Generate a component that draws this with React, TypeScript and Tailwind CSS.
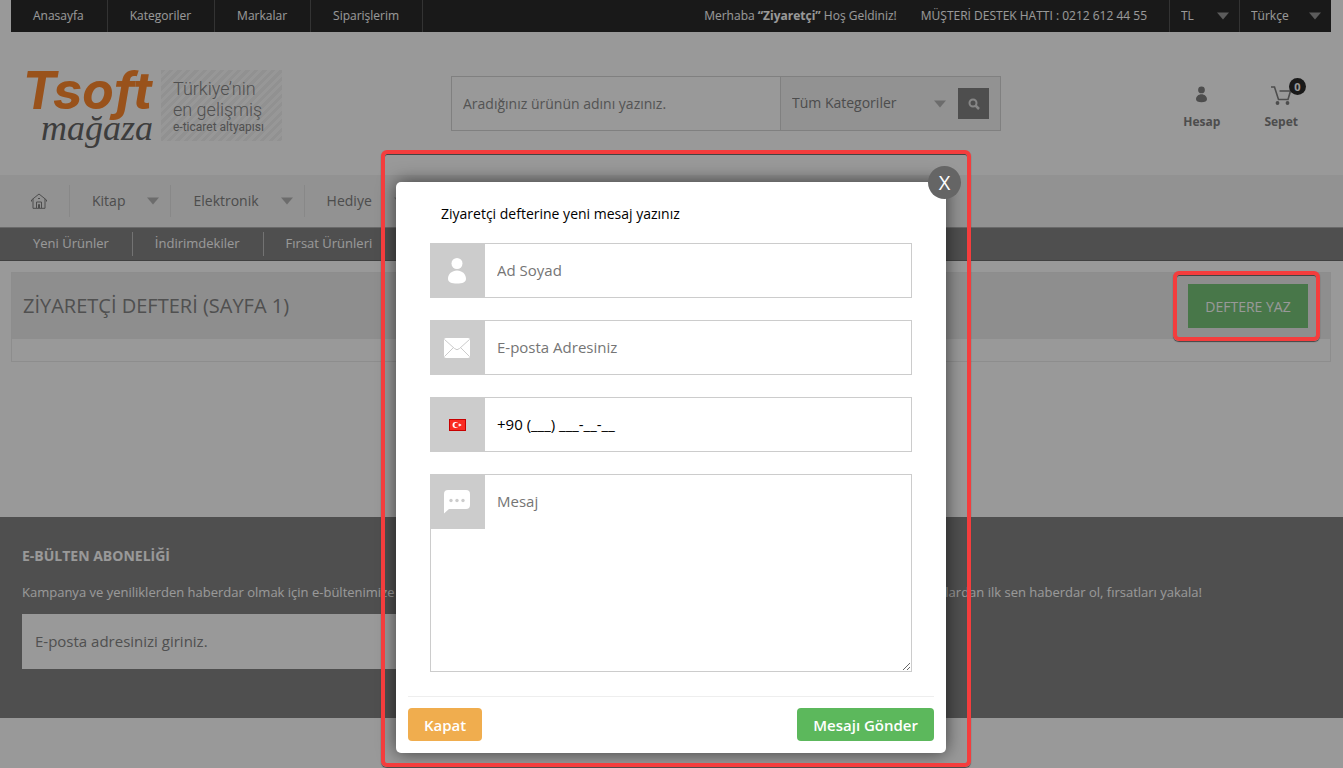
import { useState } from "react";
import type { ReactNode } from "react";

const topLinks = ["Anasayfa", "Kategoriler", "Markalar", "Siparişlerim"];
const categories = ["Kitap", "Elektronik", "Hediye"];
const subLinks = ["Yeni Ürünler", "İndirimdekiler", "Fırsat Ürünleri"];

const Arrow = ({ className = "" }: { className?: string }) => (
  <svg viewBox="0 0 12 8" className={`w-3 h-2 shrink-0 pointer-events-none ${className}`} fill="currentColor">
    <path d="M0 0.5h12L6 7.5z" />
  </svg>
);

const UserIcon = ({ className = "" }: { className?: string }) => (
  <svg viewBox="0 0 18 26" className={className} fill="currentColor">
    <circle cx="9" cy="5.5" r="5.5" />
    <path d="M9 12.5c5 0 9 3.600 9 8.200 0 3.300-3.500 4.800-9 4.800s-9-1.500-9-4.800c0-4.600 4-8.200 9-8.200z" />
  </svg>
);

const Logo = () => (
  <a href="#" className="flex items-start gap-2 shrink-0 whitespace-nowrap">
    <span className="flex flex-col w-[131px]">
      <span className="font-['Inter',sans-serif] font-bold italic text-[52px] leading-[50px] text-[#ff892e]">Tsoft</span>
      <span className="self-end font-['Liberation_Serif',serif] italic text-[36px] leading-6 text-[#666]">mağaza</span>
    </span>
    <span className="flex flex-col mt-1 w-[121px] h-[71px] pt-2 pl-3 text-[#858585] bg-[repeating-linear-gradient(135deg,#f2f2f2_0px,#f2f2f2_3px,#fcfcfc_3px,#fcfcfc_6px)] font-['Roboto',sans-serif] font-light">
      <span className="text-lg leading-[21px]">Türkiye’nin</span>
      <span className="text-lg leading-[21px]">en gelişmiş</span>
      <span className="text-xs leading-[14px] font-normal">e-ticaret altyapısı</span>
    </span>
  </a>
);

const Field = ({ id, icon, tall, children }: { id: string; icon: ReactNode; tall?: boolean; children: ReactNode }) => (
  <div className={`flex items-start border border-[#ccc] mb-[22px] ${tall ? "h-[198px]" : "h-[55px]"}`}>
    <label htmlFor={id} className="flex items-center justify-center w-[55px] h-[55px] pr-px -mt-px -ml-px bg-[#ccc] text-white shrink-0">
      {icon}
    </label>
    {children}
  </div>
);

const inputClass = "flex-1 min-w-0 h-[53px] px-3 pb-[2px] text-[15px] bg-transparent text-black placeholder-[#757575] outline-none";

const TopBar = () => (
  <div className="ml-[11px] mr-3 h-8 flex justify-between bg-[#2b2b2b] text-white text-xs">
    <nav className="flex">
      {topLinks.map((link) => (
        <a key={link} href="#" className="flex items-center pl-[22px] pr-[23px] border-r border-[#555]">{link}</a>
      ))}
    </nav>
    <div className="flex items-center whitespace-nowrap">
      <p className="mr-6">Merhaba <b>“Ziyaretçi”</b> Hoş Geldiniz!</p>
      <p className="mr-[22px]">MÜŞTERİ DESTEK HATTI : 0212 612 44 55</p>
      <div className="flex items-center h-8 w-[70px] pr-[10px] border-l border-[#555]">
        <select aria-label="Para birimi" className="appearance-none flex-1 min-w-0 h-8 pl-[11px] bg-transparent outline-none">
          <option>TL</option>
        </select>
        <Arrow className="text-[#999]" />
      </div>
      <div className="flex items-center h-8 w-[92px] pr-[10px] border-l border-[#555]">
        <select aria-label="Dil" className="appearance-none flex-1 min-w-0 h-8 pl-[11px] bg-transparent outline-none">
          <option>Türkçe</option>
        </select>
        <Arrow className="text-[#999]" />
      </div>
    </div>
  </div>
);

const Header = () => (
  <header className="flex items-start h-[143px] pl-[22px] pr-[45px]">
    <div className="pt-[34px] shrink-0"><Logo /></div>
    <form className="flex mt-11 ml-[169px] mr-auto w-[550px] h-[55px] border border-[#d5d5d5] text-sm text-[#808080]">
      <input aria-label="Ürün ara" placeholder="Aradığınız ürünün adını yazınız." className="flex-1 min-w-0 px-[11px] placeholder-[#8c8c8c] outline-none" />
      <div className="flex items-center w-[220px] pr-[11px] bg-[#f3f3f3] border-l border-[#d5d5d5]">
        <select aria-label="Kategori" className="appearance-none flex-1 min-w-0 h-full pl-[11px] pb-[2px] bg-transparent outline-none">
          <option>Tüm Kategoriler</option>
        </select>
        <Arrow className="text-[#b5b5b5] mr-3" />
        <button type="button" aria-label="Ara" className="flex items-center justify-center w-[31px] h-[31px] bg-[#838383] text-[#e0e0e0]">
          <svg viewBox="0 0 12 12" className="w-3 h-3" fill="none" stroke="currentColor" strokeWidth="2">
            <circle cx="5" cy="5" r="3.500" />
            <path d="M7.500 7.500l3.500 3.500" strokeWidth="2.500" />
          </svg>
        </button>
      </div>
    </form>
    <div className="flex gap-11 pt-[54px] text-xs font-bold text-[#808080]">
      <a href="#" className="flex flex-col items-center gap-[11px]">
        <UserIcon className="w-[11px] h-[17px]" />
        Hesap
      </a>
      <a href="#" className="relative flex flex-col items-center gap-[9px]">
        <svg viewBox="0 0 20 19" className="w-5 h-[19px]" fill="none" stroke="currentColor" strokeWidth="1.600">
          <path d="M0 1h3.500l4 12.500h9.500l2.500-8.500H8.500" />
          <circle cx="6.500" cy="17" r="1.100" fill="currentColor" />
          <circle cx="16.500" cy="17" r="1.100" fill="currentColor" />
        </svg>
        Sepet
        <span className="absolute -top-2 -right-2 w-[17px] h-[17px] rounded-full bg-[#2b2b2b] text-white text-[11px] leading-[17px] text-center">0</span>
      </a>
    </div>
  </header>
);

const Navigation = () => (
  <>
    <nav className="flex items-center h-[52px] px-[11px] bg-[#f3f3f3] text-sm text-[#808080]">
      <a href="#" aria-label="Anasayfa" className="flex items-center h-8 pl-5 pr-[22px] border-r border-[#e3e3e3]">
        <svg viewBox="0 0 16 16" className="w-4 h-4" fill="none" stroke="currentColor">
          <path d="M0.500 8.500V7L8 1l7.500 6v1.500M2 6v9.300h12V6M5.500 15V9h5v6M7.500 15v-3.500h1V15M7 5.500h2" />
        </svg>
      </a>
      {categories.map((category) => (
        <a key={category} href="#" className="flex items-center h-8 pl-[22px] pr-[11px] border-r border-[#e3e3e3]">
          {category}
          <Arrow className="text-[#b5b5b5] ml-[22px]" />
        </a>
      ))}
    </nav>
    <nav className="flex items-center h-[34px] px-[11px] bg-[#848484] border-t border-b border-t-[#b0b0b0] border-b-[#6c6c6c] text-[13px] text-white">
      {subLinks.map((link) => (
        <a key={link} href="#" className="flex items-center h-6 pl-[22px] pr-[23px] border-r border-[#c0c0c0] last:border-r-0">{link}</a>
      ))}
    </nav>
  </>
);

const Newsletter = () => (
  <section className="h-[201px] px-[22px] pt-7 bg-[#848484] text-white">
    <h2 className="text-sm leading-[22px] font-bold">E-BÜLTEN ABONELİĞİ</h2>
    <div className="flex justify-between mt-[15px] mb-3 text-[13px] leading-5 pr-[119px]">
      <p>Kampanya ve yeniliklerden haberdar olmak için e-bültenimize abone olun.</p>
      <p>Kampanyalardan ilk sen haberdar ol, fırsatları yakala!</p>
    </div>
    <input type="email" aria-label="E-posta adresi" placeholder="E-posta adresinizi giriniz." className="w-1/2 h-[55px] px-[13px] pb-[2px] bg-white text-[15px] placeholder-[#858585] outline-none" />
  </section>
);

const MessageModal = ({ onClose }: { onClose: () => void }) => {
  const [form, setForm] = useState({ name: "", email: "", phone: "+90 (___) ___-__-__", message: "" });

  const handleChange = (e: React.ChangeEvent<HTMLInputElement | HTMLTextAreaElement>) => {
    const { name, value } = e.target;
    setForm({ ...form, [name]: value });
  };

  return (
    <div className="absolute left-0 right-px top-[182px] flex justify-center">
      <div role="dialog" aria-label="Ziyaretçi defteri" className="relative w-[550px] bg-white rounded-[5px] shadow-[0_0_18px_rgba(0,0,0,0.6)] px-3 pt-[21px] pb-3">
        <div className="absolute -top-8 -left-[15px] -right-[25px] -bottom-[14px] border-4 border-[#f43d3d] rounded-md shadow-[0_1px_1px_#444,inset_0_1px_0_#444] pointer-events-none" />
        <button type="button" onClick={onClose} aria-label="Pencereyi kapat" className="absolute -top-4 -right-[15px] w-[33px] h-[33px] rounded-full bg-[#656565] text-white text-xl leading-8">X</button>
        <form onSubmit={(e) => e.preventDefault()}>
          <div className="px-[22px]">
            <h3 className="pl-[11px] mb-[18px] text-sm leading-[22px] text-black">Ziyaretçi defterine yeni mesaj yazınız</h3>
            <Field id="name" icon={<UserIcon className="w-[18px] h-[26px]" />}>
              <input id="name" name="name" value={form.name} onChange={handleChange} placeholder="Ad Soyad" className={inputClass} />
            </Field>
            <Field
              id="email"
              icon={
                <svg viewBox="0 0 26 20" className="w-[26px] h-5">
                  <rect width="26" height="20" rx="2" fill="#fff" />
                  <path d="M0.500 1.500L10.500 10.500a3.500 3.500 0 0 0 5 0L25.500 1.500M0.500 18.500l9-9M25.500 18.500l-9-9" fill="none" stroke="#ccc" />
                </svg>
              }
            >
              <input id="email" name="email" type="email" value={form.email} onChange={handleChange} placeholder="E-posta Adresiniz" className={inputClass} />
            </Field>
            <Field
              id="phone"
              icon={
                <svg viewBox="0 0 17 12" className="w-[17px] h-3">
                  <rect width="17" height="12" fill="#c80000" />
                  <rect x="1" y="1" width="15" height="10" fill="#fa2b22" />
                  <circle cx="6.500" cy="6" r="3" fill="#fff" />
                  <circle cx="7.500" cy="6" r="2.200" fill="#fa2b22" />
                  <path d="M9 6l1.200-.5.2-1.300.8 1 1.300-.3-.8 1.100.8 1.100-1.300-.3-.8 1-.2-1.300z" fill="#fff" />
                </svg>
              }
            >
              <input id="phone" name="phone" type="tel" value={form.phone} onChange={handleChange} className={inputClass} />
            </Field>
            <Field
              id="message"
              tall
              icon={
                <svg viewBox="0 0 26 24" className="w-[26px] h-6" fill="#fff">
                  <path d="M4 0h18a4 4 0 0 1 4 4v11a4 4 0 0 1-4 4H5l-5 4.500V4a4 4 0 0 1 4-4z" />
                  <g fill="#ccc">
                    <circle cx="7" cy="10.500" r="1.700" />
                    <circle cx="13" cy="10.500" r="1.700" />
                    <circle cx="19" cy="10.500" r="1.700" />
                  </g>
                </svg>
              }
            >
              <textarea id="message" name="message" value={form.message} onChange={handleChange} placeholder="Mesaj" className="flex-1 min-w-0 h-[196px] px-3 py-4 text-[15px] leading-5 text-black placeholder-[#757575] outline-none" />
            </Field>
          </div>
          <div className="flex justify-between mt-6 pt-[11px] border-t border-[#eee] text-[15px] font-semibold text-white">
            <button type="button" onClick={onClose} className="h-[33px] px-4 pt-px rounded bg-[#f0ad4e]">Kapat</button>
            <button type="submit" className="h-[33px] px-4 pt-px rounded bg-[#5cb85c]">Mesajı Gönder</button>
          </div>
        </form>
      </div>
    </div>
  );
};

const App = () => {
  const [open, setOpen] = useState(true);

  return (
    <div className="relative min-h-screen bg-white font-['Open_Sans',sans-serif]">
      <TopBar />
      <Header />
      <Navigation />
      <main className="ml-[11px] mr-3 mt-[11px] mb-[155px] border border-[#ebebeb]">
        <div className="flex items-center justify-between h-[66px] pl-[11px] pr-[22px] bg-[#ededed]">
          <h1 className="text-xl text-[#858585]">ZİYARETÇİ DEFTERİ (SAYFA 1)</h1>
          <button type="button" onClick={() => setOpen(true)} className="w-[120px] h-11 pt-px bg-[#78c67a] text-white text-sm">DEFTERE YAZ</button>
        </div>
        <div className="h-[22px]" />
      </main>
      <Newsletter />
      {open && <div className="absolute inset-0 bg-black/40" />}
      <div className="absolute right-[23px] top-[271px] w-[147px] h-[70px] border-4 border-[#f43d3d] rounded-md shadow-[0_1px_1px_#444,inset_0_1px_0_#444] pointer-events-none" />
      {open && <MessageModal onClose={() => setOpen(false)} />}
    </div>
  );
};

export default App;
